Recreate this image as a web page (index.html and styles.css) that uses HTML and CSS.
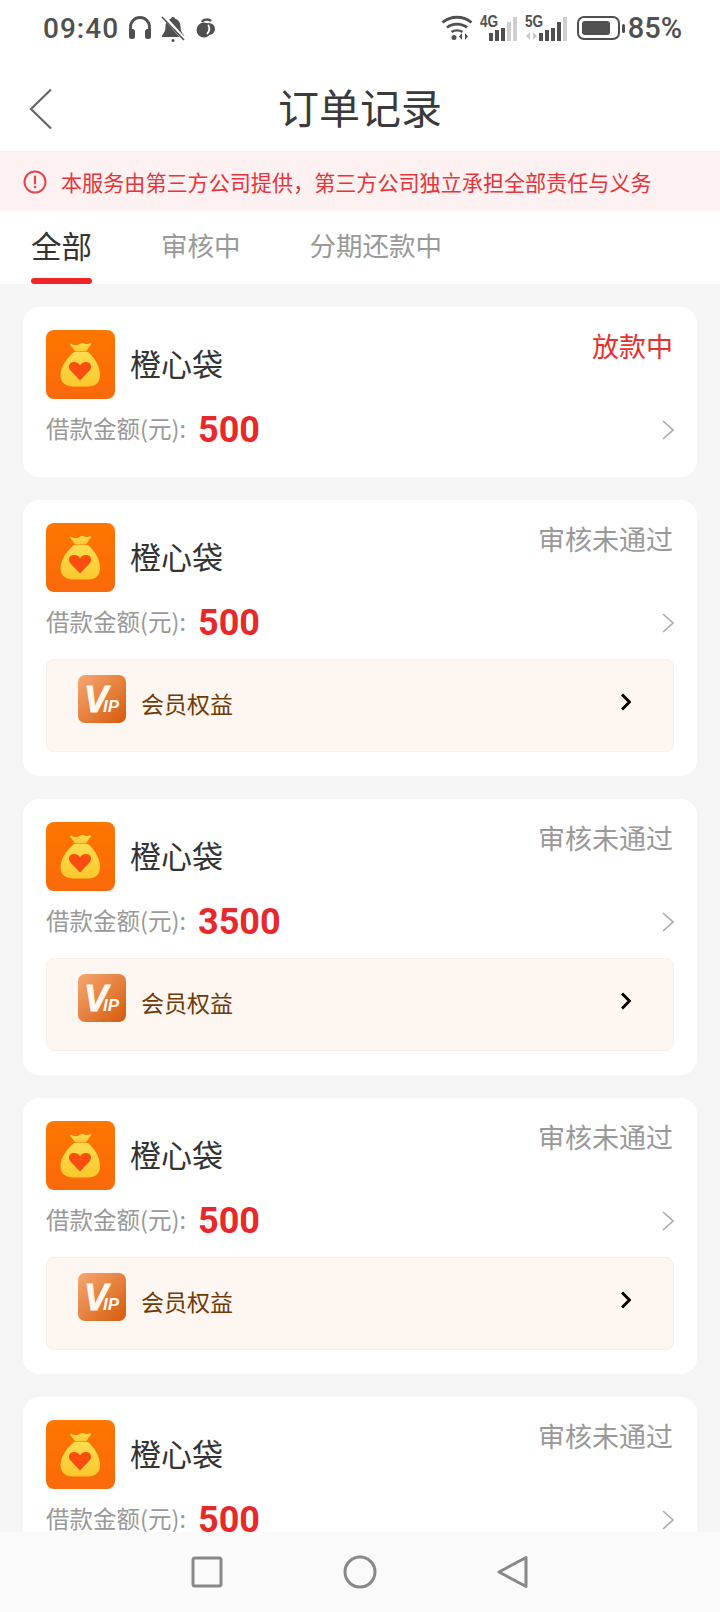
FILE: index.html
```html
<!DOCTYPE html>
<html lang="zh-CN">
<head>
    <meta charset="UTF-8">
    <meta name="viewport" content="width=device-width, initial-scale=1.0">
    <title>订单记录</title>
    <link rel="stylesheet" href="styles.css">
</head>
<body>
<svg class="defs" width="0" height="0">
    <defs>
        <linearGradient id="logoBg" x1="0" y1="0" x2="0" y2="1">
            <stop offset="0" stop-color="#ff7600"/>
            <stop offset="1" stop-color="#fa690b"/>
        </linearGradient>
        <linearGradient id="bagBg" x1="0" y1="0" x2="0" y2="1">
            <stop offset="0" stop-color="#ffdc50"/>
            <stop offset="1" stop-color="#fcc82c"/>
        </linearGradient>
        <linearGradient id="vipBg" x1="0" y1="0" x2="1" y2="1">
            <stop offset="0" stop-color="#f6a871"/>
            <stop offset="1" stop-color="#d65a0c"/>
        </linearGradient>
        <symbol id="logo" viewBox="0 0 69 69">
            <rect width="69" height="69" rx="8" fill="url(#logoBg)"/>
            <path d="M24.500 13.500c2.500 1.500 5 2 7 1.500 2-.5 3.500-2.500 5.500-2 1.500.4 2.500 1.500 4.500 1 1.500-.4 3.500-1.200 3.800-.2.300 1-2 2.200-3 4.200-.8 1.600-1.500 3.500-3 3.500H30c-1.500 0-2-1.800-3-3.300-1-1.500-3-2.700-3-3.700 0-.6.200-.8.500-1z" fill="url(#bagBg)"/>
            <path d="M28 22h14c6 5 12 14 12 23 0 8-5 11.500-12 11.500H27c-7 0-12.500-3.500-12.500-11.500 0-9 7.500-18 13.500-23z" fill="url(#bagBg)"/>
            <path d="M34 50.500 24.500 40.500c-3-3.500-1.500-8.500 3.500-8.500 3 0 5 1.500 6 3.500 1-2 3-3.500 6-3.500 5 0 6.500 5 3.500 8.500z" fill="#fb4e0e"/>
        </symbol>
        <symbol id="vip" viewBox="0 0 48 48">
            <rect width="48" height="48" rx="7" fill="url(#vipBg)"/>
            <text x="6" y="37" class="vip-v">V</text>
            <text x="25" y="37" class="vip-ip">IP</text>
        </symbol>
        <symbol id="chev" viewBox="0 0 12 20">
            <path d="M1 1l10 9-10 9" fill="none" stroke="currentColor" stroke-width="1.600"/>
        </symbol>
        <symbol id="chevBold" viewBox="0 0 10 18">
            <path d="M1 1.500 8.500 9 1 16.500" fill="none" stroke="#000" stroke-width="3"/>
        </symbol>
    </defs>
</svg>

<div class="app">
    <div class="status">
        <div class="status-side">
            <span class="time">09:40</span>
            <svg class="ico-phones" width="24" height="24" viewBox="0 0 24 24"><path d="M2.500 15V11a9.500 9.500 0 0 1 19 0v4" fill="none" stroke="#505050" stroke-width="2.800"/><rect x="1" y="13" width="6" height="10" rx="2.500" fill="#505050"/><rect x="17" y="13" width="6" height="10" rx="2.500" fill="#505050"/></svg>
            <svg class="ico-bell" width="24" height="27" viewBox="0 0 24 27"><path d="M12 2c1.200 0 2 .8 2 1.800 3.500 1 5.500 4 5.500 7.700 0 4 1.200 6.500 3.500 9v1.500H1V20.500c2.300-2.500 3.500-5 3.500-9 0-3.700 2-6.700 5.500-7.700C10 2.800 10.800 2 12 2z" fill="#505050"/><circle cx="12" cy="25.500" r="1.500" fill="#505050"/><path d="M2 1l21 23" stroke="#fff" stroke-width="4"/><path d="M1 2l22 23" stroke="#505050" stroke-width="1.600"/></svg>
            <svg class="ico-app" width="20" height="20" viewBox="0 0 20 20"><circle cx="8" cy="12" r="7.500" fill="#505050"/><circle cx="13" cy="11" r="6" fill="#505050"/><path d="M6 4c1-3 7-3 9-1" fill="none" stroke="#505050" stroke-width="2.500"/><path d="M12 7c2 2 2 6-1 9" fill="none" stroke="#fff" stroke-width="1.800"/></svg>
        </div>
        <div class="status-side">
            <svg width="32" height="26" viewBox="0 0 32 26"><path d="M1.500 7.500c8-7 21-7 29 0" fill="none" stroke="#505050" stroke-width="2.800"/><path d="M6 12.500c5.500-4.500 14.500-4.500 20 0" fill="none" stroke="#505050" stroke-width="2.600"/><path d="M10.500 17c3-2.200 8-2.200 11 0" fill="none" stroke="#505050" stroke-width="2.400"/><circle cx="13" cy="22.500" r="2.500" fill="#505050"/><path d="M21 18v7l-3-3.500zM24 18v7l3-3.500z" fill="#505050"/></svg>
            <div class="signal">
                <span class="net">4G</span>
                <i class="bar b1"></i><i class="bar b2"></i><i class="bar b3"></i><i class="bar b4 off"></i><i class="bar b5 off"></i>
            </div>
            <div class="signal sig-2">
                <span class="net">5G</span>
                <svg class="updown" width="13" height="8" viewBox="0 0 13 8"><path d="M5 0v8L1 4zM8 0v8l4-4z" fill="#c9c9c9"/></svg>
                <i class="bar b1"></i><i class="bar b2"></i><i class="bar b3"></i><i class="bar b4"></i><i class="bar b5 off"></i>
            </div>
            <div class="battery">
                <div class="batt-body"><div class="batt-fill"></div></div>
                <div class="batt-cap"></div>
            </div>
            <span class="pct">85%</span>
        </div>
    </div>

    <header class="topbar">
        <svg class="back" width="24" height="42" viewBox="0 0 24 42"><path d="M22 1.500 2 21l20 19.500" fill="none" stroke="#666" stroke-width="2.200"/></svg>
        <h1 class="title">订单记录</h1>
    </header>

    <div class="notice">
        <svg width="24" height="24" viewBox="0 0 24 24"><circle cx="12" cy="12" r="10.500" fill="none" stroke="#e0474f" stroke-width="2"/><path d="M12 6.500v7" stroke="#e0474f" stroke-width="2.200" stroke-linecap="round"/><circle cx="12" cy="17" r="1.300" fill="#e0474f"/></svg>
        <span>本服务由第三方公司提供，第三方公司独立承担全部责任与义务</span>
    </div>

    <nav class="tabs">
        <a class="tab active">全部</a>
        <a class="tab">审核中</a>
        <a class="tab">分期还款中</a>
    </nav>

    <main class="list">
        <section class="card">
            <div class="card-top">
                <svg class="logo"><use href="#logo"/></svg>
                <span class="name">橙心袋</span>
                <span class="state state-red">放款中</span>
            </div>
            <div class="amount-row">
                <span class="amount-label">借款金额(元):</span>
                <span class="amount">500</span>
                <svg class="arrow"><use href="#chev"/></svg>
            </div>
        </section>

        <section class="card">
            <div class="card-top">
                <svg class="logo"><use href="#logo"/></svg>
                <span class="name">橙心袋</span>
                <span class="state">审核未通过</span>
            </div>
            <div class="amount-row">
                <span class="amount-label">借款金额(元):</span>
                <span class="amount">500</span>
                <svg class="arrow"><use href="#chev"/></svg>
            </div>
            <div class="vip-box">
                <svg class="vip-icon"><use href="#vip"/></svg>
                <span class="vip-text">会员权益</span>
                <svg class="vip-arrow"><use href="#chevBold"/></svg>
            </div>
        </section>

        <section class="card">
            <div class="card-top">
                <svg class="logo"><use href="#logo"/></svg>
                <span class="name">橙心袋</span>
                <span class="state">审核未通过</span>
            </div>
            <div class="amount-row">
                <span class="amount-label">借款金额(元):</span>
                <span class="amount">3500</span>
                <svg class="arrow"><use href="#chev"/></svg>
            </div>
            <div class="vip-box">
                <svg class="vip-icon"><use href="#vip"/></svg>
                <span class="vip-text">会员权益</span>
                <svg class="vip-arrow"><use href="#chevBold"/></svg>
            </div>
        </section>

        <section class="card">
            <div class="card-top">
                <svg class="logo"><use href="#logo"/></svg>
                <span class="name">橙心袋</span>
                <span class="state">审核未通过</span>
            </div>
            <div class="amount-row">
                <span class="amount-label">借款金额(元):</span>
                <span class="amount">500</span>
                <svg class="arrow"><use href="#chev"/></svg>
            </div>
            <div class="vip-box">
                <svg class="vip-icon"><use href="#vip"/></svg>
                <span class="vip-text">会员权益</span>
                <svg class="vip-arrow"><use href="#chevBold"/></svg>
            </div>
        </section>

        <section class="card">
            <div class="card-top">
                <svg class="logo"><use href="#logo"/></svg>
                <span class="name">橙心袋</span>
                <span class="state">审核未通过</span>
            </div>
            <div class="amount-row">
                <span class="amount-label">借款金额(元):</span>
                <span class="amount">500</span>
                <svg class="arrow"><use href="#chev"/></svg>
            </div>
        </section>
    </main>

    <div class="navbar">
        <svg width="40" height="40" viewBox="0 0 40 40"><rect x="6" y="6" width="28" height="28" rx="2" fill="none" stroke="#888" stroke-width="3"/></svg>
        <svg width="40" height="40" viewBox="0 0 40 40"><circle cx="20" cy="20" r="15" fill="none" stroke="#888" stroke-width="3"/></svg>
        <svg width="40" height="40" viewBox="0 0 40 40"><path d="M6 20 33 5.500v29z" fill="none" stroke="#888" stroke-width="3" stroke-linejoin="round"/></svg>
    </div>
</div>
</body>
</html>
```

FILE: styles.css
```css
* {
    box-sizing: border-box;
}
html, body {
    margin: 0;
    padding: 0;
    height: 1612px;
    overflow: hidden;
}
body {
    font-family: "Noto Sans CJK SC", "Noto Sans", sans-serif;
    background: #f5f5f5;
}
.defs {
    position: absolute;
}
.vip-v {
    font-family: "Liberation Sans", sans-serif;
    font-size: 36px;
    font-weight: bold;
    font-style: italic;
    fill: #fff8f0;
    stroke: #fff8f0;
    stroke-width: 0.8px;
}
.vip-ip {
    font-family: "Liberation Sans", sans-serif;
    font-size: 17px;
    font-weight: bold;
    font-style: italic;
    fill: #fff8f0;
}
.app {
    position: relative;
    width: 720px;
    height: 1612px;
    overflow: hidden;
}

/* status bar */
.status {
    height: 56px;
    background: #fff;
    padding: 0 38px 0 43px;
    display: flex;
    justify-content: space-between;
    align-items: center;
}
.status-side {
    display: flex;
    align-items: center;
}
.time {
    font-family: Roboto, sans-serif;
    font-size: 28px;
    font-weight: 500;
    letter-spacing: 1px;
    color: #505050;
}
.ico-phones {
    margin-left: 9px;
}
.ico-bell {
    margin-left: 9px;
}
.ico-app {
    margin-left: 11px;
}
.signal {
    position: relative;
    width: 37px;
    height: 26px;
    margin-left: 7px;
    display: flex;
    align-items: flex-end;
    justify-content: flex-end;
    gap: 2px;
}
.sig-2 {
    width: 42px;
    margin-left: 8px;
}
.net {
    position: absolute;
    left: 0;
    top: -3px;
    font-family: "Liberation Sans", sans-serif;
    font-size: 17px;
    font-weight: bold;
    color: #505050;
    transform: scaleX(0.8);
    transform-origin: left;
}
.updown {
    position: absolute;
    left: 0;
    bottom: 1px;
}
.bar {
    display: block;
    width: 4px;
    background: #505050;
}
.bar.off {
    background: #cfcfcf;
}
.b1 { height: 8px; }
.b2 { height: 11px; }
.b3 { height: 13px; }
.b4 { height: 19px; }
.b5 { height: 24px; }
.battery {
    display: flex;
    align-items: center;
    margin-left: 10px;
}
.batt-body {
    width: 43px;
    height: 24px;
    border: 2px solid #505050;
    border-radius: 7px;
    padding: 3px;
}
.batt-fill {
    width: 85%;
    height: 100%;
    background: #505050;
    border-radius: 3px;
}
.batt-cap {
    width: 3px;
    height: 9px;
    margin-left: 2px;
    background: #505050;
    border-radius: 2px;
}
.pct {
    margin-left: 3px;
    font-family: Roboto, sans-serif;
    font-size: 29px;
    font-weight: 500;
    color: #505050;
}

/* header */
.topbar {
    position: relative;
    height: 96px;
    background: #fff;
    padding-top: 4px;
    display: flex;
    align-items: center;
    justify-content: center;
    border-bottom: 1px solid #f2f2f2;
}
.back {
    position: absolute;
    left: 29px;
    top: 32px;
}
.title {
    margin: 0;
    font-size: 41px;
    font-weight: 400;
    color: #3a3a3a;
}

/* notice */
.notice {
    height: 59px;
    background: #fdf1f1;
    padding-left: 23px;
    display: flex;
    align-items: center;
    gap: 14px;
    font-size: 21.100px;
    color: #e5343b;
}

/* tabs */
.tabs {
    height: 73px;
    background: #fff;
    padding-left: 31px;
    display: flex;
    gap: 69px;
}
.tab {
    position: relative;
    font-size: 26.500px;
    line-height: 68px;
    color: #999;
}
.tab.active {
    font-size: 30.500px;
    color: #333;
}
.tab.active::after {
    content: "";
    position: absolute;
    left: 0;
    right: 0;
    bottom: 0;
    height: 6px;
    border-radius: 3px;
    background: #f02528;
}

/* order cards */
.list {
    padding: 22.600px 23px 0;
    display: flex;
    flex-direction: column;
    gap: 23px;
}
.card {
    background: #fff;
    border-radius: 16px;
    padding: 23.500px 23px;
}
.card-top {
    display: flex;
    align-items: flex-start;
}
.logo {
    width: 69px;
    height: 69px;
    flex: none;
}
.name {
    margin-left: 15px;
    font-size: 31px;
    line-height: 65px;
    color: #333;
}
.state {
    margin-left: auto;
    margin-right: 1px;
    font-size: 27px;
    line-height: 32px;
    color: #999;
}
.state-red {
    color: #e8302e;
}
.amount-row {
    height: 54px;
    display: flex;
    align-items: center;
    padding-top: 7px;
}
.amount-label {
    width: 152px;
    margin-top: -3px;
    white-space: nowrap;
    font-size: 23.500px;
    color: #999;
}
.amount {
    font-family: Roboto, sans-serif;
    font-size: 36px;
    font-weight: 700;
    color: #e8292c;
}
.arrow {
    width: 12px;
    height: 20px;
    margin-left: auto;
    color: #aaa;
}
.vip-box {
    height: 93px;
    margin-top: 13px;
    padding: 0 42px 0 31px;
    display: flex;
    align-items: center;
    background: #fef6f0;
    border: 1px solid #fbeee4;
    border-radius: 8px;
}
.vip-icon {
    width: 48px;
    height: 48px;
    margin-top: -13px;
}
.vip-text {
    margin-left: 15px;
    margin-top: -6px;
    font-size: 23px;
    color: #6e3a08;
}
.vip-arrow {
    width: 10px;
    height: 18px;
    margin-left: auto;
    margin-top: -8px;
}

/* android nav, sits over the list */
.navbar {
    position: absolute;
    left: 0;
    right: 0;
    bottom: 0;
    height: 80px;
    background: #fafafa;
    display: flex;
    align-items: center;
    justify-content: center;
    gap: 113px;
}
```
